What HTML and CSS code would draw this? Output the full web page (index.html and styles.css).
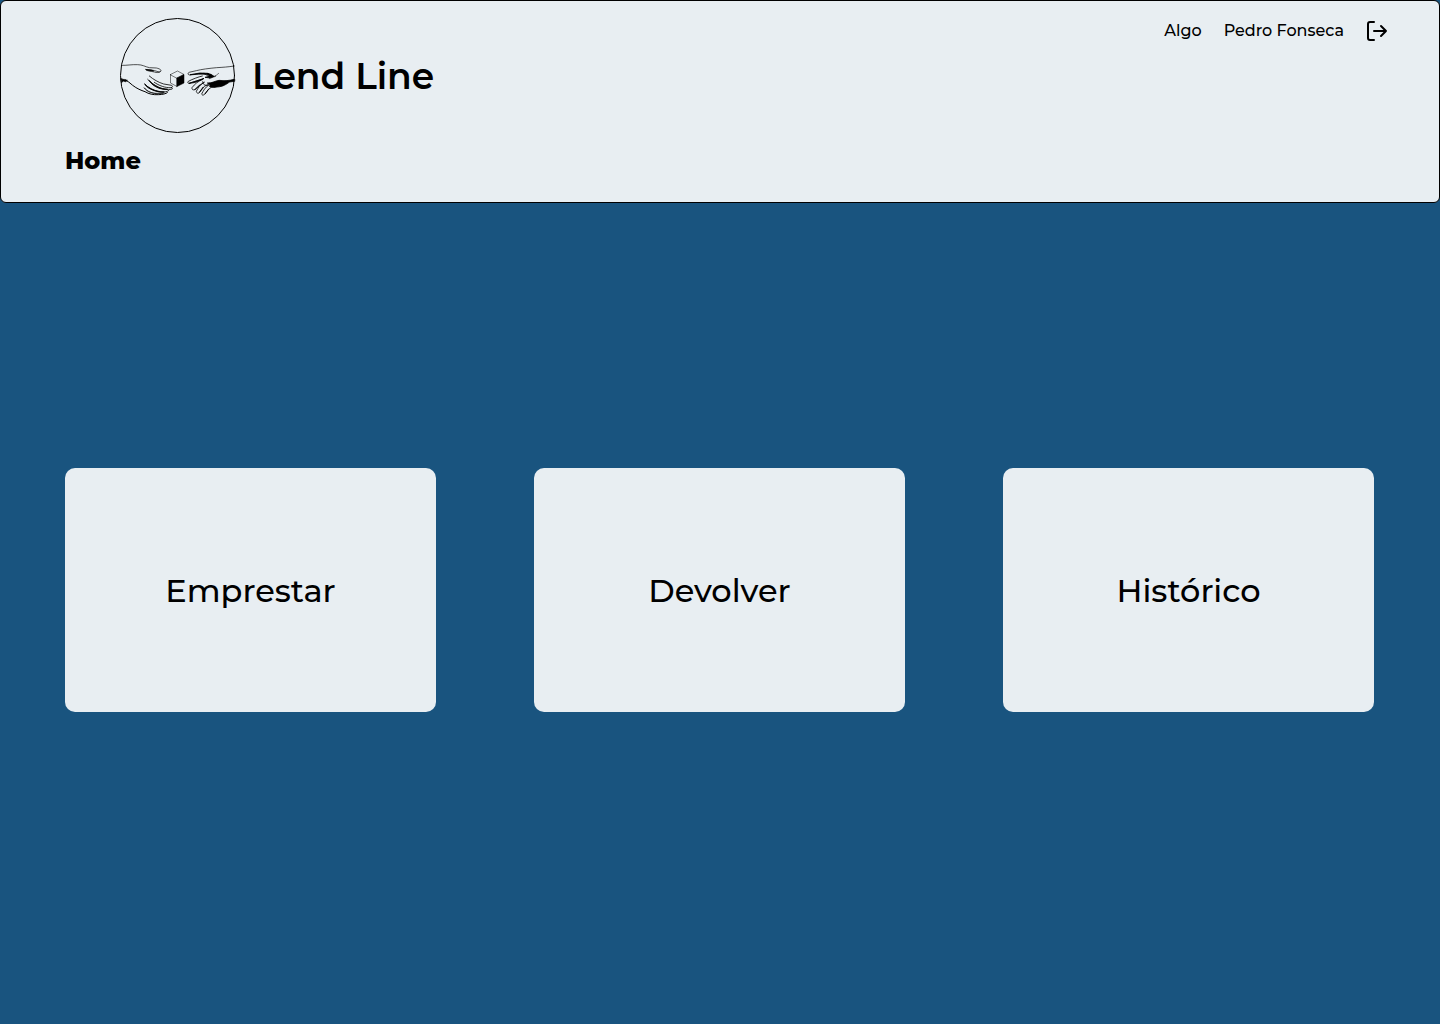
FILE: index.html
```html
<!DOCTYPE html>
<html lang="pt">
<head>
  <meta charset="utf-8">
  <meta name="viewport" content="width=device-width, initial-scale=1">
  <title>Lend Line</title>
  <link rel="stylesheet" href="styles.css">
</head>
<body>
  <header class="header">
    <div class="header-top">
      <a class="brand" href="#">
        <svg class="brand-logo" viewBox="0 0 116 116" fill="none" stroke="#000" stroke-linecap="round" stroke-linejoin="round" aria-hidden="true">
          <circle cx="57.5" cy="57.5" r="57"/>
          <!-- left hand -->
          <g transform="translate(-5 37) scale(.3333)" stroke-width="2.400">
            <path d="M20 31C34 32 50 28 68 29C82 29 90 35 103 38L124 39C130 40 137 43 138 46C138 50 134 52 129 50C122 48 117 46 110 45L94 44" stroke-width="2"/>
            <path d="M91 43C98 50 108 48 118 51C125 54 133 53 136 50" stroke-width="2"/>
            <path d="M94 44L108 45L116 48L105 47Z" fill="#000"/>
            <path d="M30 74C38 78 45 84 53 91C66 101 78 106 90 110C101 117 115 120 130 119C143 119 153 116 157 113" stroke-width="3"/>
            <path d="M18 71L28 74L37 76L32 80L26 78L20 82Z" fill="#000"/>
            <path d="M103 63C116 74 130 82 146 87L170 91C174 94 173 98 168 98C151 99 132 92 118 82"/>
            <path d="M98 73C107 83 119 91 132 97C145 103 158 104 169 103C174 102 173 99 169 98"/>
            <path d="M103 77C112 88 128 98 142 101L158 103C146 104 134 102 122 95C113 90 107 84 103 77Z" fill="#000"/>
            <path d="M89 87C103 102 121 110 138 111C149 112 158 110 162 106"/>
            <path d="M90 88C99 98 117 107 136 110L148 111C137 112 120 109 106 102C98 98 93 94 90 88Z" fill="#000"/>
            <path d="M88 99C98 110 111 115 124 115L146 114C138 118 120 117 106 112C98 109 92 105 88 99Z" stroke-width="2"/>
          </g>
          <!-- cube -->
          <path d="M50.500 56.500L57.500 53L64 56.500L57 60Z M50.500 56.500V65L57 68.500V60" stroke-width=".5"/>
          <path d="M57 60L64 56.500V65L57 68.500Z" fill="#000" stroke-width=".5"/>
          <!-- right hand -->
          <g transform="translate(55 37) scale(.3333)" stroke-width="2.400">
            <path d="M178 33C159 36 143 37 125 38C103 40 79 43 64 47L42 52C38 54 38 59 43 60L64 58L87 55" stroke-width="2"/>
            <path d="M46 59L75 54L99 55L108 60L96 58L71 57Z" fill="#000"/>
            <path d="M88 56C95 60 99 64 110 66L122 63"/>
            <path d="M97 56L108 58L117 64L105 69L90 67L103 64Z" fill="#000"/>
            <path d="M131 55L119 65L103 71" stroke-width="1.500"/>
            <path d="M82 63C69 66 54 72 40 79C36 83 40 87 45 84L63 78L81 73"/>
            <path d="M43 85L65 78L87 70L77 75L61 82Z" fill="#000"/>
            <path d="M84 73C70 78 59 87 51 98C50 103 54 107 60 103L73 91L88 82"/>
            <path d="M87 82C75 89 69 99 64 109C65 115 70 117 74 112L88 94L100 88"/>
            <path d="M100 91C91 97 85 107 80 117C82 123 88 120 91 115L101 103L111 95"/>
            <path d="M60 104L74 91M73 112L84 97M90 117L101 102" stroke-width="3"/>
            <path d="M83 80C83 88 88 92 100 91"/>
            <path d="M178 73C164 77 148 78 132 76C119 78 112 85 97 84C103 88 106 91 104 95C112 98 118 98 126 96C145 95 153 88 164 81L178 79Z" fill="#000"/>
          </g>
        </svg>
        <span class="brand-name">Lend Line</span>
      </a>
      <nav class="user-nav" aria-label="Conta">
        <a href="#">Algo</a>
        <a href="#">Pedro Fonseca</a>
        <button class="logout" type="button" aria-label="Sair">
          <svg width="24" height="24" viewBox="0 0 24 24" fill="none" stroke="#000" stroke-width="2" stroke-linecap="round" stroke-linejoin="round" aria-hidden="true">
            <path d="M8 3H4a2 2 0 0 0-2 2v14a2 2 0 0 0 2 2h4M8 12h12M15 7l5 5-5 5"/>
          </svg>
        </button>
      </nav>
    </div>
    <h1 class="page-title">Home</h1>
  </header>
  <main class="actions">
    <a class="card" href="#">Emprestar</a>
    <a class="card" href="#">Devolver</a>
    <a class="card" href="#">Histórico</a>
  </main>
</body>
</html>
```
FILE: styles.css
```css
* {
  box-sizing: border-box;
}

body {
  margin: 0;
  min-height: 100vh;
  display: flex;
  flex-direction: column;
  background: #19547f;
  color: #000;
  font-family: Montserrat, Inter, sans-serif;
}

a {
  color: inherit;
  text-decoration: none;
}

.header {
  padding: 17px 49px 25px 64px;
  background: #e8eef2;
  border: 1px solid #000;
  border-radius: 6px;
}

.header-top {
  display: flex;
  justify-content: space-between;
  align-items: flex-start;
}

.brand {
  display: flex;
  align-items: center;
  gap: 16px;
  margin-left: 55px;
}

.brand-logo {
  width: 116px;
  height: 116px;
}

.brand-name {
  font-size: 36px;
  line-height: 48px;
  font-weight: 600;
}

.user-nav {
  display: flex;
  align-items: center;
  gap: 22px;
  font-size: 16px;
  line-height: 26px;
  font-weight: 500;
}

.logout {
  display: flex;
  padding: 0;
  border: 0;
  background: none;
  cursor: pointer;
}

.page-title {
  margin: 11px 0 0;
  font-size: 24px;
  line-height: 32px;
  font-weight: 800;
}

.actions {
  flex: 1;
  display: grid;
  grid-template-columns: repeat(3, 1fr);
  align-content: center;
  gap: 98px;
  padding: 0 66px 48px 65px;
}

.card {
  display: flex;
  align-items: center;
  justify-content: center;
  min-height: 244px;
  padding-top: 2px;
  background: #e8eef2;
  border-radius: 10px;
  font-size: 32px;
  line-height: 40px;
  font-weight: 500;
}
```
